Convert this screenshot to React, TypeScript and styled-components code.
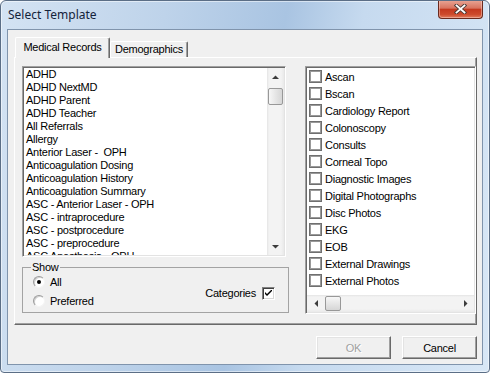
import React from 'react';
import styled, { createGlobalStyle } from 'styled-components';

const records = [
  'ADHD',
  'ADHD NextMD',
  'ADHD Parent',
  'ADHD Teacher',
  'All Referrals',
  'Allergy',
  'Anterior Laser -  OPH',
  'Anticoagulation Dosing',
  'Anticoagulation History',
  'Anticoagulation Summary',
  'ASC - Anterior Laser - OPH',
  'ASC - intraprocedure',
  'ASC - postprocedure',
  'ASC - preprocedure',
  'ASC Anesthesia - OPH',
];

const categories = [
  'Ascan',
  'Bscan',
  'Cardiology Report',
  'Colonoscopy',
  'Consults',
  'Corneal Topo',
  'Diagnostic Images',
  'Digital Photographs',
  'Disc Photos',
  'EKG',
  'EOB',
  'External Drawings',
  'External Photos',
];

const Arrow = ({ dir }: { dir: 'up' | 'down' | 'left' | 'right' }) => {
  const pts = {
    up: '0,4 7,4 3.5,0.5',
    down: '0,0 7,0 3.5,3.5',
    left: '4,0 4,7 0.5,3.5',
    right: '0,0 0,7 3.5,3.5',
  }[dir];
  const vertical = dir === 'up' || dir === 'down';
  return (
    <svg width={vertical ? 7 : 4} height={vertical ? 4 : 7} viewBox={vertical ? '0 0 7 4' : '0 0 4 7'}>
      <polygon points={pts} fill="#3c3c3c" />
    </svg>
  );
};

const App: React.FC = () => {
  return (
    <>
      <GlobalStyle />
      <Frame>
        <TitleBar>
          <Title>Select Template</Title>
          <CloseButton aria-label="Close">
            <svg width="13" height="10" viewBox="0 0 13 10">
              <path d="M2.5 1.5 L10.5 8.5 M10.5 1.5 L2.5 8.5" stroke="#4a3a36" strokeWidth="3.6" strokeLinecap="square" />
              <path d="M2.5 1.5 L10.5 8.5 M10.5 1.5 L2.5 8.5" stroke="#ffffff" strokeWidth="1.8" strokeLinecap="square" />
            </svg>
          </CloseButton>
        </TitleBar>

        <Client>
          <TabStrip>
            <Tab $active>Medical Records</Tab>
            <Tab>Demographics</Tab>
          </TabStrip>

          <Panel>
            <LeftColumn>
              <ListBox $w={264} $h={191}>
                <Items>
                  {records.map((r) => (
                    <TextRow key={r}>{r}</TextRow>
                  ))}
                </Items>
                <VScroll>
                  <ArrowButton><Arrow dir="up" /></ArrowButton>
                  <VTrack>
                    <VThumb />
                  </VTrack>
                  <ArrowButton><Arrow dir="down" /></ArrowButton>
                </VScroll>
              </ListBox>

              <Group>
                <Legend>Show</Legend>
                <GroupBody>
                  <RadioColumn>
                    <OptionRow>
                      <Radio $checked />
                      <span>All</span>
                    </OptionRow>
                    <OptionRow>
                      <Radio />
                      <span>Preferred</span>
                    </OptionRow>
                  </RadioColumn>
                  <OptionRow>
                    <span>Categories</span>
                    <CheckBox>
                      <svg width="7" height="7" viewBox="0 0 7 7">
                        <path d="M0 2 L0 4 L2 6 L7 1 L7 -1 L2 4 Z" fill="#000" />
                      </svg>
                    </CheckBox>
                  </OptionRow>
                </GroupBody>
              </Group>
            </LeftColumn>

            <ListBox $w={171} $h={248} $column>
              <CheckItems>
                {categories.map((c) => (
                  <CheckRow key={c}>
                    <ListCheck />
                    <span>{c}</span>
                  </CheckRow>
                ))}
              </CheckItems>
              <HScroll>
                <ArrowButton><Arrow dir="left" /></ArrowButton>
                <HTrack>
                  <HThumb />
                </HTrack>
                <ArrowButton><Arrow dir="right" /></ArrowButton>
              </HScroll>
            </ListBox>
          </Panel>

          <ButtonRow>
            <DialogButton disabled>OK</DialogButton>
            <DialogButton>Cancel</DialogButton>
          </ButtonRow>
        </Client>
      </Frame>
    </>
  );
};

const GlobalStyle = createGlobalStyle`
  html, body {
    margin: 0;
    padding: 0;
    background: #ffffff;
  }
`;

const Frame = styled.div`
  width: 490px;
  height: 373px;
  box-sizing: border-box;
  border: 1px solid #5b6e86;
  border-radius: 6px 6px 4px 4px;
  background: linear-gradient(100deg, #d4e3f3 0%, #bed3ea 30%, #a9c4e2 52%, #c6daef 66%, #d8e7f6 100%);
  box-shadow: inset 0 0 0 1px rgba(255, 255, 255, 0.5);
  display: flex;
  flex-direction: column;
  overflow: hidden;
  font-family: 'Liberation Sans', Arial, sans-serif;
  font-size: 11px;
  letter-spacing: -0.25px;
  color: #000;
`;

const TitleBar = styled.div`
  height: 28px;
  flex: none;
  display: flex;
  align-items: flex-start;
  justify-content: space-between;
  padding: 0 6px 0 7px;
`;

const Title = styled.span`
  font-family: 'Noto Sans', 'Open Sans', sans-serif;
  font-size: 12px;
  letter-spacing: 0;
  line-height: 28px;
  color: #14233a;
`;

const CloseButton = styled.button`
  width: 45px;
  height: 19px;
  margin-top: -1px;
  padding: 0;
  box-sizing: border-box;
  border: 1px solid #6a2a1e;
  border-top: none;
  border-radius: 0 0 4px 4px;
  background: linear-gradient(to bottom, #e9a797 0%, #d8735f 45%, #c4391f 52%, #cd4a2c 80%, #e07d5e 100%);
  box-shadow: inset 0 0 0 1px rgba(255, 220, 210, 0.45);
  display: flex;
  align-items: center;
  justify-content: center;
`;

const Client = styled.div`
  margin: 0 6px;
  height: 336px;
  box-sizing: border-box;
  border: 1px solid #8094ac;
  background: #f0f0f0;
  padding: 7px 5px 5px 6px;
  display: flex;
  flex-direction: column;
`;

const TabStrip = styled.div`
  height: 20px;
  flex: none;
  display: flex;
  align-items: flex-end;
  padding-left: 1px;
`;

const Tab = styled.div<{ $active?: boolean }>`
  position: relative;
  z-index: 1;
  box-sizing: border-box;
  width: ${(p) => (p.$active ? 95 : 78)}px;
  height: ${(p) => (p.$active ? 21 : 16)}px;
  margin-bottom: ${(p) => (p.$active ? -1 : 0)}px;
  border-top: 1px solid #ffffff;
  border-left: 1px solid #ffffff;
  border-right: 1px solid #696969;
  border-radius: 2px 2px 0 0;
  box-shadow: inset -1px 0 #a0a0a0;
  background: #f0f0f0;
  display: flex;
  justify-content: center;
  align-items: ${(p) => (p.$active ? 'flex-start' : 'center')};
  padding-top: ${(p) => (p.$active ? 3 : 0)}px;
  line-height: 13px;
  white-space: nowrap;
`;

const Panel = styled.div`
  height: 268px;
  flex: none;
  box-sizing: border-box;
  border: 1px solid;
  border-color: #ffffff #696969 #696969 #ffffff;
  box-shadow: inset -1px -1px #a0a0a0;
  padding: 8px 0 10px 7px;
  display: grid;
  grid-template-columns: 267px 171px;
  column-gap: 16px;
  align-items: start;
`;

const LeftColumn = styled.div`
  display: flex;
  flex-direction: column;
`;

const ListBox = styled.div<{ $w: number; $h: number; $column?: boolean }>`
  width: ${(p) => p.$w}px;
  height: ${(p) => p.$h}px;
  box-sizing: border-box;
  background: #ffffff;
  border: 1px solid;
  border-color: #a0a0a0 #ffffff #ffffff #a0a0a0;
  box-shadow: inset 1px 1px #696969, inset -1px -1px #e3e3e3;
  padding: 1px;
  display: flex;
  flex-direction: ${(p) => (p.$column ? 'column' : 'row')};
  overflow: hidden;
`;

const Items = styled.div`
  flex: 1;
  overflow: hidden;
  padding-left: 2px;
`;

const TextRow = styled.div`
  height: 13px;
  line-height: 13px;
  white-space: pre;
`;

const VScroll = styled.div`
  width: 17px;
  flex: none;
  display: flex;
  flex-direction: column;
  background: linear-gradient(to right, #e4e4e4 0, #f3f3f3 2px, #f3f3f3 14px, #e9e9e9 100%);
`;

const ArrowButton = styled.div`
  width: 17px;
  height: 17px;
  flex: none;
  display: flex;
  align-items: center;
  justify-content: center;
`;

const VTrack = styled.div`
  flex: 1;
  padding-top: 3px;
`;

const VThumb = styled.div`
  width: 15px;
  height: 17px;
  margin-left: 1px;
  box-sizing: border-box;
  border: 1px solid #989898;
  border-radius: 2px;
  background: linear-gradient(to right, #f7f7f7, #e6e6e6 50%, #d6d6d6);
`;

const CheckItems = styled.div`
  flex: 1;
  overflow: hidden;
  padding-left: 2px;
`;

const CheckRow = styled.div`
  height: 17px;
  display: flex;
  align-items: center;
  gap: 3px;
  white-space: nowrap;
`;

const ListCheck = styled.span`
  width: 13px;
  height: 13px;
  flex: none;
  box-sizing: border-box;
  border: 1px solid #6f6f6f;
  box-shadow: inset 0 0 0 1px #999999;
  background: #ffffff;
`;

const HScroll = styled.div`
  height: 17px;
  flex: none;
  display: flex;
  background: linear-gradient(to bottom, #e4e4e4 0, #f3f3f3 2px, #f3f3f3 14px, #e9e9e9 100%);
`;

const HTrack = styled.div`
  flex: 1;
  display: flex;
  align-items: center;
  padding-left: 1px;
`;

const HThumb = styled.div`
  width: 16px;
  height: 15px;
  box-sizing: border-box;
  border: 1px solid #989898;
  border-radius: 2px;
  background: linear-gradient(to bottom, #f7f7f7, #e6e6e6 50%, #d6d6d6);
`;

const Group = styled.fieldset`
  margin: 4px 0 0;
  padding: 0;
  border: 1px solid #a3a3a3;
  min-width: 0;
`;

const Legend = styled.legend`
  margin-left: 8px;
  padding: 0 1px;
  line-height: 13px;
`;

const GroupBody = styled.div`
  height: 38px;
  display: flex;
  justify-content: space-between;
  align-items: center;
  padding: 0 13px 0 10px;
`;

const RadioColumn = styled.div`
  display: flex;
  flex-direction: column;
  gap: 3px;
  align-self: flex-start;
`;

const OptionRow = styled.label`
  height: 16px;
  display: flex;
  align-items: center;
  gap: 6px;
  white-space: nowrap;
`;

const Radio = styled.span<{ $checked?: boolean }>`
  position: relative;
  width: 12px;
  height: 12px;
  flex: none;
  box-sizing: border-box;
  border-radius: 50%;
  border: 1px solid;
  border-color: #9a9a9a #f4f4f4 #f4f4f4 #9a9a9a;
  box-shadow: inset 1px 1px #d0d0d0;
  background: #ffffff;
  margin-right: -1px;

  &::after {
    content: '';
    display: ${(p) => (p.$checked ? 'block' : 'none')};
    position: absolute;
    left: 3px;
    top: 3px;
    width: 4px;
    height: 4px;
    border-radius: 50%;
    background: #000;
  }
`;

const CheckBox = styled.span`
  width: 13px;
  height: 13px;
  flex: none;
  box-sizing: border-box;
  border: 1px solid;
  border-color: #808080 #ffffff #ffffff #808080;
  box-shadow: inset 1px 1px #404040, inset -1px -1px #d8d8d8;
  background: #ffffff;
  display: flex;
  align-items: center;
  justify-content: center;
`;

const ButtonRow = styled.div`
  margin-top: 11px;
  display: flex;
  justify-content: flex-end;
  gap: 11px;
`;

const DialogButton = styled.button`
  width: 75px;
  height: 23px;
  box-sizing: border-box;
  padding: 0;
  border: 1px solid;
  border-color: #ffffff #696969 #696969 #ffffff;
  box-shadow: inset -1px -1px #a0a0a0, inset 1px 1px #e3e3e3;
  background: #f0f0f0;
  font-family: 'Liberation Sans', Arial, sans-serif;
  font-size: 11px;
  letter-spacing: -0.25px;
  color: #000;

  &:disabled {
    color: #a0a0a0;
    text-shadow: 1px 1px #ffffff;
  }
`;

export default App;
